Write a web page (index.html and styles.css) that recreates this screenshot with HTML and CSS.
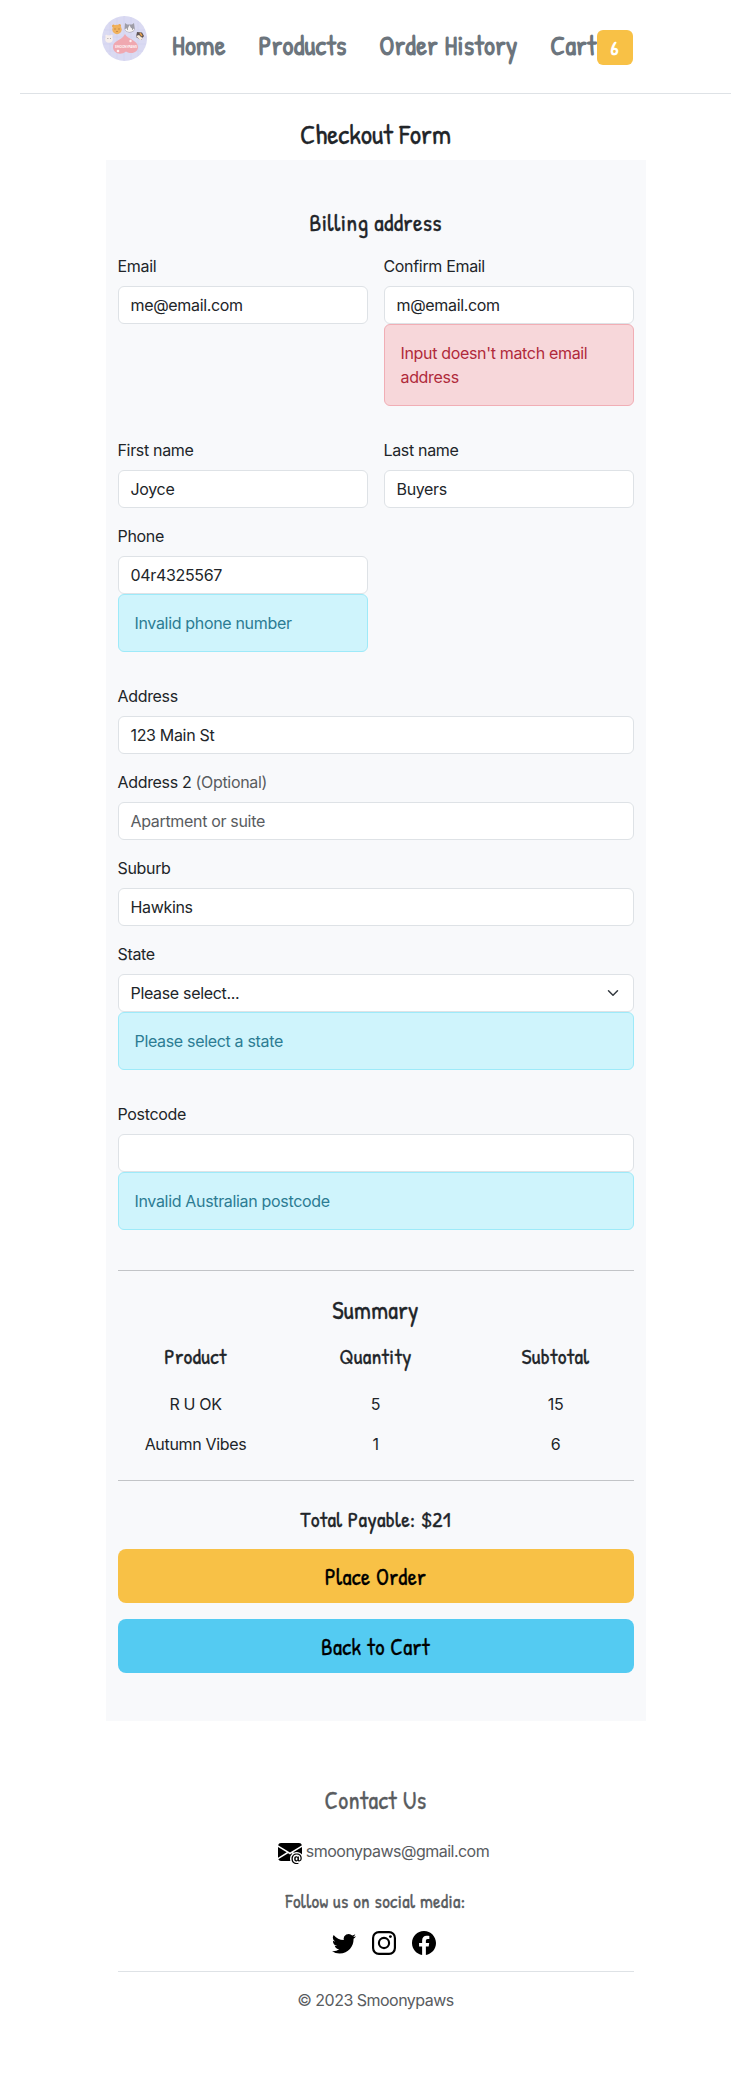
FILE: index.html
```html
<!DOCTYPE html>
<html lang="en">
<head>
<meta charset="utf-8">
<title>Smoonypaws Checkout</title>
<link rel="stylesheet" href="styles.css">
</head>
<body>
<header class="site-header">
  <svg class="logo" viewBox="0 0 45 45" role="img" aria-label="Smoonypaws">
    <circle cx="22.5" cy="22.5" r="22.5" fill="#dadaf2"/>
    <path d="M8 6v33M15 2v41M22 0v45M29 1v43M36 5v35M2 14h41M0 21h45M1 28h43M4 35h37" stroke="#d0d0ee" stroke-width=".6"/>
    <path d="M23 18c2 5 13 6 13 13 0 5-6 8-12 4.500C18 40 11 37 11 31c0-7 9-6 12-13z" fill="#f0a8b0"/>
    <circle cx="7" cy="23" r="3.800" fill="#f7efed"/><circle cx="4.500" cy="20" r="1.200" fill="#f7efed"/><circle cx="9.500" cy="20" r="1.200" fill="#f7efed"/>
    <path d="M5.500 22.500h.8M8 22.500h.8" stroke="#777" stroke-width=".8"/>
    <circle cx="11.500" cy="10" r="1.500" fill="#eda64e"/><circle cx="17.500" cy="9.500" r="1.500" fill="#eda64e"/><circle cx="15" cy="13.500" r="4.700" fill="#f0b25f"/>
    <path d="M12.500 13h1M16.500 13h1M14.500 15.500h1" stroke="#96612c" stroke-width=".9"/>
    <path d="M23 7l2 1.500h5L32 7l.8 6q-1 3.500-5 3.500T22.500 13z" fill="#9e9ca6"/><path d="M23 13l3-1 1.500-3 1.500 3 3.500 1q-1 3-5 3t-4.500-3z" fill="#f5f1f2"/>
    <path d="M25 13h1M30 13h1" stroke="#555" stroke-width=".9"/>
    <path d="M35 16l5 .5 2 3.500-3 4-5-3z" fill="#5d5355"/><path d="M34 20l3-1 2 2 2 1-2.500 2.200z" fill="#f6eadd"/><path d="M38 17l2 3" stroke="#e5a04e" stroke-width="1.500"/>
    <text class="logo-text" x="24" y="32" text-anchor="middle" textLength="22" lengthAdjust="spacingAndGlyphs">SMOONYPAWS</text>
    <circle cx="28.500" cy="25" r="1.200" fill="#fff0f0"/><circle cx="16" cy="35" r="1.300" fill="#fff0f0"/>
  </svg>
  <nav class="nav">
    <a class="nav-link">Home</a>
    <a class="nav-link">Products</a>
    <a class="nav-link">Order History</a>
    <a class="nav-link nav-cart">Cart</a><span class="badge">6</span>
  </nav>
</header>

<main class="container">
  <h3 class="page-title">Checkout Form</h3>
  <form class="checkout">
    <h4 class="billing-title">Billing address</h4>
    <div class="fields">
      <div class="field"><label>Email</label><div class="input">me@email.com</div></div>
      <div class="field"><label>Confirm Email</label><div class="input">m@email.com</div><div class="alert danger">Input doesn't match email address</div></div>
      <div class="field"><label>First name</label><div class="input">Joyce</div></div>
      <div class="field"><label>Last name</label><div class="input">Buyers</div></div>
      <div class="field"><label>Phone</label><div class="input">04r4325567</div><div class="alert info">Invalid phone number</div></div>
      <div class="field wide"><label>Address</label><div class="input">123 Main St</div></div>
      <div class="field wide"><label>Address 2 <span class="muted">(Optional)</span></label><div class="input muted">Apartment or suite</div></div>
      <div class="field wide"><label>Suburb</label><div class="input">Hawkins</div></div>
      <div class="field wide"><label>State</label><div class="input select">Please select...<svg width="16" height="12" viewBox="0 0 16 16"><path fill="none" stroke="#343a40" stroke-linecap="round" stroke-linejoin="round" stroke-width="2" d="m2 5 6 6 6-6"/></svg></div><div class="alert info">Please select a state</div></div>
      <div class="field wide"><label>Postcode</label><div class="input"></div><div class="alert info">Invalid Australian postcode</div></div>
    </div>
    <hr class="rule">
    <h4 class="summary-title">Summary</h4>
    <div class="summary">
      <h5>Product</h5><h5>Quantity</h5><h5>Subtotal</h5>
      <span>R U OK</span><span>5</span><span>15</span>
      <span>Autumn Vibes</span><span>1</span><span>6</span>
    </div>
    <hr class="rule rule-total">
    <h5 class="total">Total Payable: $21</h5>
    <button type="button" class="btn warning">Place Order</button>
    <button type="button" class="btn primary">Back to Cart</button>
  </form>
</main>

<footer class="footer">
  <h4 class="contact">Contact Us</h4>
  <div class="mail">
    <svg width="24" height="24" viewBox="0 0 16 16"><path d="M2 2A2 2 0 0 0 .05 3.555L8 8.414l7.950-4.859A2 2 0 0 0 14 2H2Zm-2 9.800V4.698l5.803 3.546L0 11.801Zm6.761-2.970-6.570 4.026A2 2 0 0 0 2 14h6.256A4.493 4.493 0 0 1 8 12.500a4.490 4.490 0 0 1 1.606-3.446l-.367-.225L8 9.586l-1.239-.757ZM16 9.671V4.697l-5.803 3.546.338.208A4.482 4.482 0 0 1 12.500 8c1.414 0 2.675.652 3.500 1.671Z"/><path d="M15.834 12.244c0 1.168-.577 2.025-1.587 2.025-.503 0-1.002-.228-1.120-.648h-.043c-.118.416-.543.643-1.015.643-.770 0-1.259-.542-1.259-1.434v-.529c0-.844.481-1.400 1.260-1.400.585 0 .870.333.953.630h.030v-.568h.905v2.190c0 .272.180.420.411.420.315 0 .639-.415.639-1.390v-.118c0-1.277-.950-2.326-2.484-2.326h-.040c-1.582 0-2.640 1.067-2.640 2.724v.157c0 1.867 1.237 2.654 2.570 2.654h.045c.507 0 .935-.070 1.180-.180v.731c-.219.100-.643.175-1.237.175h-.044C10.438 16 9 14.820 9 12.646v-.214C9 10.360 10.421 9 12.485 9h.035c2.120 0 3.314 1.430 3.314 3.034v.210Zm-4.040.210v.227c0 .586.227.800.581.800.310 0 .564-.170.564-.743v-.367c0-.516-.275-.708-.572-.708-.346 0-.573.245-.573.791Z"/></svg>
    <span>smoonypaws@gmail.com</span>
  </div>
  <h6 class="follow">Follow us on social media:</h6>
  <div class="social">
    <svg width="24" height="24" viewBox="0 0 16 16"><path d="M5.026 15c6.038 0 9.341-5.003 9.341-9.334 0-.140 0-.282-.006-.422A6.685 6.685 0 0 0 16 3.542a6.658 6.658 0 0 1-1.889.518 3.301 3.301 0 0 0 1.447-1.817 6.533 6.533 0 0 1-2.087.793A3.286 3.286 0 0 0 7.875 6.030a9.325 9.325 0 0 1-6.767-3.429 3.289 3.289 0 0 0 1.018 4.382A3.323 3.323 0 0 1 .640 6.575v.045a3.288 3.288 0 0 0 2.632 3.218 3.203 3.203 0 0 1-.865.115 3.230 3.230 0 0 1-.614-.057 3.283 3.283 0 0 0 3.067 2.277A6.588 6.588 0 0 1 .780 13.580a6.320 6.320 0 0 1-.780-.045A9.344 9.344 0 0 0 5.026 15z"/></svg>
    <svg width="24" height="24" viewBox="0 0 16 16"><rect x=".72" y=".72" width="14.560" height="14.560" rx="3.900" fill="none" stroke="#000" stroke-width="1.440"/><circle cx="8" cy="8" r="3.390" fill="none" stroke="#000" stroke-width="1.440"/><circle cx="12.270" cy="3.730" r=".96"/></svg>
    <svg width="24" height="24" viewBox="0 0 16 16"><path d="M16 8.049c0-4.446-3.582-8.050-8-8.050C3.580 0-.002 3.603-.002 8.050c0 4.017 2.926 7.347 6.750 7.951v-5.625h-2.030V8.050H6.750V6.275c0-2.017 1.195-3.131 3.022-3.131.876 0 1.791.157 1.791.157v1.980h-1.009c-.993 0-1.303.621-1.303 1.258v1.510h2.218l-.354 2.326H9.250V16c3.824-.604 6.750-3.934 6.750-7.951z"/></svg>
  </div>
  <p class="copyright">© 2023 Smoonypaws</p>
</footer>
</body>
</html>
```
FILE: styles.css
```css
* { box-sizing: border-box; }
body { margin: 0; background: #fff; color: #212529; font: 16px/24px Inter, sans-serif; letter-spacing: -.33px; }
h3, h4, h5, h6, p { margin: 0; }
h3, h4, h5, h6, .nav, .btn { font-family: "Patrick Hand", "Liberation Sans Narrow", sans-serif; font-weight: 500; text-align: center; letter-spacing: .3px; -webkit-text-stroke: .3px currentColor; }

.site-header { height: 94px; margin: 0 20px; padding: 16px 0 0 82px; border-bottom: 1px solid #dee2e6; display: flex; align-items: flex-start; }
.logo { width: 45px; height: 45px; flex: none; }
.logo-text { font: 700 4.5px Lato, sans-serif; letter-spacing: 0; fill: #fff; }
.nav { display: flex; align-items: center; height: 35px; margin: 14px 0 0 25px; font-size: 27px; font-weight: 700; color: #6c757d; white-space: nowrap; -webkit-text-stroke: 0; }
.nav-link { margin: -5px 32.7px 0 0; }
.nav-cart { margin-right: 0; }
.badge { width: 36px; height: 35px; border-radius: 6px; background: #f8c146; color: #fff; font-size: 20px; line-height: 36px; }

.container { width: 540px; margin: 0 auto; }
.page-title { height: 66px; padding-top: 23px; font-size: 28px; line-height: 34px; letter-spacing: 0; }
.checkout { height: 1561px; padding: 48px 12px; background: #f8f9fb; }
.billing-title { height: 46px; font-size: 24px; line-height: 29px; }
.fields { display: grid; grid-template-columns: 1fr 1fr; gap: 16px; }
.wide { grid-column: 1 / -1; }
label { display: block; margin-bottom: 8px; }
.input { height: 38px; padding: 6px 12px; border: 1px solid #dee2e6; border-radius: 6px; background: #fff; }
.muted { color: #595c5f; }
.select { display: flex; justify-content: space-between; align-items: center; }
.alert { padding: 16px; margin-bottom: 16px; border: 1px solid; border-radius: 6px; }
.danger { background: #f7d7da; border-color: #f1aeb5; color: #b02a3b; }
.info { background: #cff4fc; border-color: #9eeaf9; color: #2c7c93; }
.rule { margin: 24px 0; border: 0; border-top: 1px solid #c2c4c7; }
.summary-title { height: 37px; padding-top: 1px; font-size: 24.7px; line-height: 29px; }
.summary { display: grid; grid-template-columns: 156px 156px 156px; column-gap: 24px; text-align: center; }
.summary h5 { height: 52px; padding-top: 8px; font-size: 21.7px; line-height: 32px; }
.summary span { height: 40px; padding-top: 8px; }
.rule-total { margin: 16px 0 24px; }
.total { height: 44px; font-size: 21.8px; line-height: 28px; }
.btn { display: block; width: 100%; height: 54px; margin-bottom: 16px; padding: 0; border: 0; border-radius: 8px; font-size: 23px; color: #000; }
.warning { background: #f8c146; }
.primary { background: #54cbf2; }

.footer { width: 516px; margin: 63px auto 0; color: #595c5f; text-align: center; letter-spacing: -.52px; }
.contact { height: 55px; font-size: 24.5px; line-height: 32px; }
.mail { display: flex; justify-content: center; gap: 4px; padding-left: 16px; height: 50px; }
.mail svg { margin-top: 1px; }
.follow { height: 42px; font-size: 18.9px; line-height: 24px; }
.social { display: flex; justify-content: center; gap: 16px; padding: 0 0 16px 17px; border-bottom: 1px solid #dee2e6; }
.copyright { padding-top: 16px; }
```
